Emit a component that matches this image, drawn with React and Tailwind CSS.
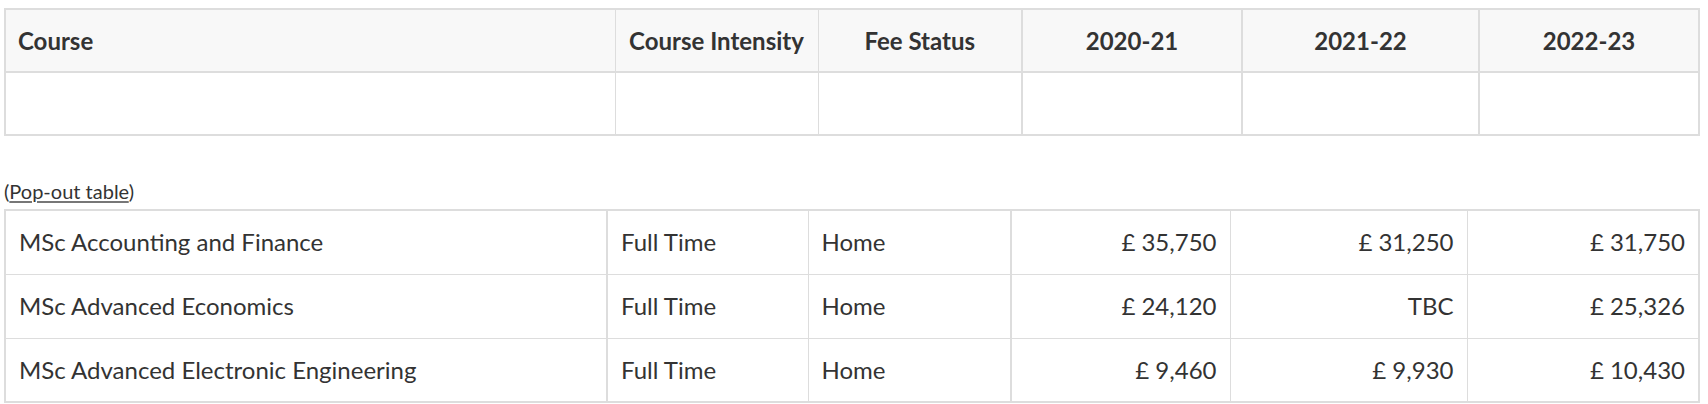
import React from "react";

const headers = ["Course", "Course Intensity", "Fee Status", "2020-21", "2021-22", "2022-23"];

const rows = [
  ["MSc Accounting and Finance", "Full Time", "Home", "£ 35,750", "£ 31,250", "£ 31,750"],
  ["MSc Advanced Economics", "Full Time", "Home", "£ 24,120", "TBC", "£ 25,326"],
  ["MSc Advanced Electronic Engineering", "Full Time", "Home", "£ 9,460", "£ 9,930", "£ 10,430"],
];

const topCols = [610, 203, 204, 220, 237, 220];
const botCols = [602, 201, 203, 219, 237, 232];

export default function App() {
  return (
    <div
      className="w-[1708px] h-[404px] overflow-hidden bg-white text-[#333333] pl-[4px] pr-[10px] pt-[8px]"
      style={{ fontFamily: "Lato, 'Open Sans', sans-serif" }}
    >
      <table className="table-fixed border-collapse w-[1694px] border-2 border-[#dddddd]">
        <colgroup>
          {topCols.map((w, i) => (
            <col key={i} style={{ width: w }} />
          ))}
        </colgroup>
        <thead>
          <tr className="h-[63px] bg-[#f8f8f8]">
            {headers.map((h, i) => (
              <th
                key={i}
                className={`font-bold text-[24px] px-[12px] border-[#dddddd] border-b-2 ${
                  i === 0 ? "text-left" : "text-center"
                } ${i >= 3 ? "border-l-2" : "border-l"}`}
              >
                {h}
              </th>
            ))}
          </tr>
        </thead>
        <tbody>
          <tr className="h-[63px]">
            {headers.map((h, i) => (
              <td
                key={i}
                className={`border-[#dddddd] ${i >= 3 ? "border-l-2" : "border-l"}`}
              />
            ))}
          </tr>
        </tbody>
      </table>

      <div className="mt-[40px] h-[33px] text-[20px] leading-[30px]">
        (<a href="#" className="underline decoration-[#777777] underline-offset-2 text-[#333333]">Pop-out table</a>)
      </div>

      <table className="table-fixed border-collapse w-[1694px] border-2 border-[#dddddd]">
        <colgroup>
          {botCols.map((w, i) => (
            <col key={i} style={{ width: w }} />
          ))}
        </colgroup>
        <tbody>
          {rows.map((r, ri) => (
            <tr key={ri} className="h-[64px]">
              {r.map((c, i) => (
                <td
                  key={i}
                  className={`text-[24px] px-[13px] border-[#dddddd] border-b ${
                    i >= 3 ? "text-right" : "text-left"
                  } ${i === 1 || i === 3 ? "border-l-2" : "border-l"}`}
                >
                  {c}
                </td>
              ))}
            </tr>
          ))}
        </tbody>
      </table>
    </div>
  );
}
